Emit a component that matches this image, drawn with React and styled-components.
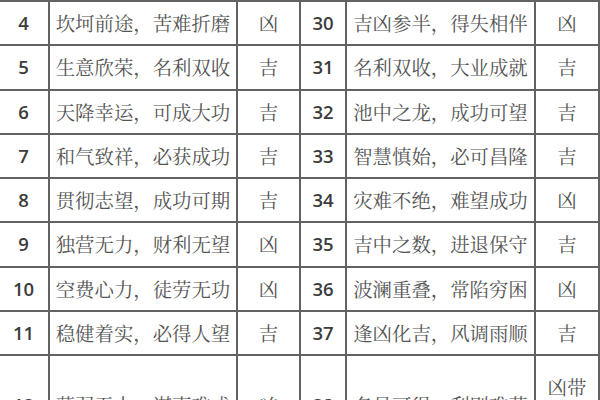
import React from "react";
import styled, { createGlobalStyle } from "styled-components";

const Global = createGlobalStyle`
  html, body { margin: 0; padding: 0; background: #fff; overflow: hidden; }
  body { width: 600px; height: 400px; }
`;

const Page = styled.div`
  width: 600px;
  height: 400px;
  overflow: hidden;
  background: #fff;
`;

const Table = styled.table`
  border-collapse: collapse;
  table-layout: fixed;
  margin-left: -3px;
  margin-top: 0;
  width: 601px;
`;

const Cell = styled.td`
  border: 2px solid #626262;
  padding: 0 4px;
  text-align: center;
  vertical-align: middle;
  line-height: 42.25px;
  height: ${(p) => (p.$tall ? "98px" : "auto")};
  white-space: ${(p) => (p.$kind === "result" ? "normal" : "nowrap")};
  overflow: hidden;
  color: ${(p) => (p.$kind === "num" ? "#3c3c3c" : "#545454")};
  font-family: ${(p) =>
    p.$kind === "num"
      ? `"Open Sans", Lato, sans-serif`
      : `"Noto Serif CJK SC", "Noto Sans CJK SC", sans-serif`};
  font-weight: ${(p) => (p.$kind === "num" ? 600 : 400)};
  font-size: ${(p) => (p.$kind === "num" ? "18.5px" : "19.4px")};
`;

const Wrap = styled.span`
  display: inline-block;
  line-height: 38px;
  width: 42px;
  position: relative;
  top: 2px;
`;

const rows = [
  [4, "坎坷前途，苦难折磨", "凶", 30, "吉凶参半，得失相伴", "凶"],
  [5, "生意欣荣，名利双收", "吉", 31, "名利双收，大业成就", "吉"],
  [6, "天降幸运，可成大功", "吉", 32, "池中之龙，成功可望", "吉"],
  [7, "和气致祥，必获成功", "吉", 33, "智慧慎始，必可昌隆", "吉"],
  [8, "贯彻志望，成功可期", "吉", 34, "灾难不绝，难望成功", "凶"],
  [9, "独营无力，财利无望", "凶", 35, "吉中之数，进退保守", "吉"],
  [10, "空费心力，徒劳无功", "凶", 36, "波澜重叠，常陷穷困", "凶"],
  [11, "稳健着实，必得人望", "吉", 37, "逢凶化吉，风调雨顺", "吉"],
  [12, "薄弱无力，谋事难成", "凶", 38, "名虽可得，利则难获", "凶带吉"],
];

const widths = [51, 188, 63, 46, 189, 64];

export default function App() {
  return (
    <Page>
      <Global />
      <Table>
        <colgroup>
          {widths.map((w, i) => (
            <col key={i} style={{ width: w }} />
          ))}
        </colgroup>
        <tbody>
          {rows.map((r, i) => {
            const tall = i === rows.length - 1;
            return (
              <tr key={r[0]}>
                <Cell $kind="num" $tall={tall}>{r[0]}</Cell>
                <Cell $kind="text" $tall={tall}>{r[1]}</Cell>
                <Cell $kind="result" $tall={tall}>{r[2]}</Cell>
                <Cell $kind="num" $tall={tall}>{r[3]}</Cell>
                <Cell $kind="text" $tall={tall}>{r[4]}</Cell>
                <Cell $kind="result" $tall={tall}>
                  {r[5].length > 1 ? <Wrap>{r[5]}</Wrap> : r[5]}
                </Cell>
              </tr>
            );
          })}
        </tbody>
      </Table>
    </Page>
  );
}
